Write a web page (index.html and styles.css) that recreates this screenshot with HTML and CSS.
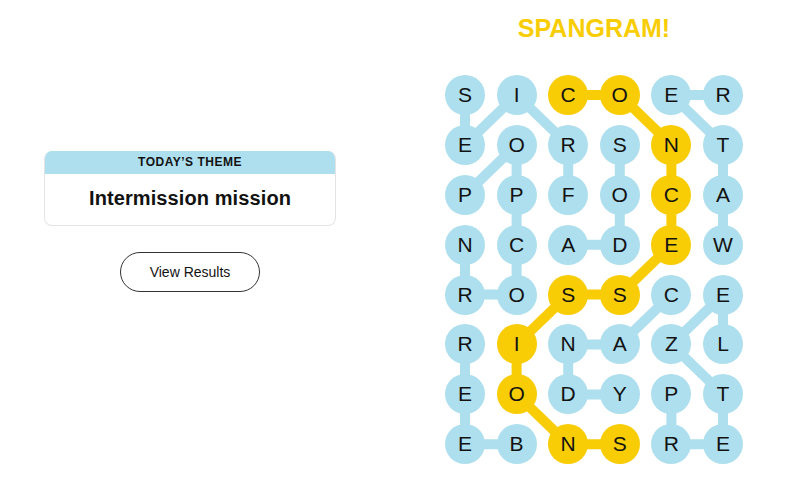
FILE: index.html
```html
<!DOCTYPE html>
<html lang="en">
<head>
<meta charset="utf-8">
<title>Strands</title>
<link rel="stylesheet" href="styles.css">
</head>
<body>
<main class="page">
  <section class="left">
    <div class="theme-card">
      <div class="theme-head">TODAY’S THEME</div>
      <div class="theme-body">Intermission mission</div>
    </div>
    <button class="results-btn" type="button">View Results</button>
  </section>
  <section class="right">
    <h1 class="spangram">SPANGRAM!</h1>
    <div class="board">
      <svg class="links" width="298" height="390" viewBox="0 0 298 390" aria-hidden="true">
        <g fill="none" stroke="#aedfee" stroke-width="10" stroke-linejoin="round" stroke-linecap="round">
          <polyline points="123.2,119.8 123.2,69.9 71.6,20 20,69.9 20,20"/>
          <polyline points="20,119.8 71.6,69.9 71.6,119.8 71.6,169.7 71.6,219.6 20,219.6 20,169.7"/>
          <polyline points="174.8,69.9 174.8,119.8 174.8,169.7 123.2,169.7"/>
          <polyline points="278,169.7 278,119.8 278,69.9 226.4,20 278,20"/>
          <polyline points="71.6,369.3 20,369.3 20,319.4 20,269.5"/>
          <polyline points="226.4,219.6 174.8,269.5 123.2,269.5 123.2,319.4 174.8,319.4"/>
          <polyline points="226.4,319.4 226.4,369.3 278,369.3 278,319.4 226.4,269.5 278,219.6 278,269.5"/>
        </g>
        <polyline fill="none" stroke="#f8cd05" stroke-width="10" stroke-linejoin="round" points="123.2,20 174.8,20 226.4,69.9 226.4,119.8 226.4,169.7 174.8,219.6 123.2,219.6 71.6,269.5 71.6,319.4 123.2,369.3 174.8,369.3"/>
      </svg>
      <div class="cell">S</div><div class="cell">I</div><div class="cell gold">C</div><div class="cell gold">O</div><div class="cell">E</div><div class="cell">R</div>
      <div class="cell">E</div><div class="cell">O</div><div class="cell">R</div><div class="cell">S</div><div class="cell gold">N</div><div class="cell">T</div>
      <div class="cell">P</div><div class="cell">P</div><div class="cell">F</div><div class="cell">O</div><div class="cell gold">C</div><div class="cell">A</div>
      <div class="cell">N</div><div class="cell">C</div><div class="cell">A</div><div class="cell">D</div><div class="cell gold">E</div><div class="cell">W</div>
      <div class="cell">R</div><div class="cell">O</div><div class="cell gold">S</div><div class="cell gold">S</div><div class="cell">C</div><div class="cell">E</div>
      <div class="cell">R</div><div class="cell gold">I</div><div class="cell">N</div><div class="cell">A</div><div class="cell">Z</div><div class="cell">L</div>
      <div class="cell">E</div><div class="cell gold">O</div><div class="cell">D</div><div class="cell">Y</div><div class="cell">P</div><div class="cell">T</div>
      <div class="cell">E</div><div class="cell">B</div><div class="cell gold">N</div><div class="cell gold">S</div><div class="cell">R</div><div class="cell">E</div>
    </div>
  </section>
</main>
</body>
</html>
```

FILE: styles.css
```css
html, body {
  margin: 0;
  padding: 0;
  background: #ffffff;
}

body {
  font-family: "Liberation Sans", Arial, sans-serif;
  color: #121212;
  width: 800px;
  height: 504px;
  overflow: hidden;
}

.page {
  display: flex;
  height: 504px;
}

.left {
  width: 380px;
  display: flex;
  flex-direction: column;
  align-items: center;
  padding-top: 151px;
  box-sizing: border-box;
}

.theme-card {
  width: 292px;
  box-sizing: border-box;
  border: 1px solid #e3e3e3;
  border-top: none;
  border-radius: 8px;
  overflow: hidden;
  background: #ffffff;
}

.theme-head {
  background: #aedfee;
  height: 23px;
  line-height: 23px;
  text-align: center;
  font-size: 12px;
  font-weight: 700;
  letter-spacing: 0.5px;
  color: #121212;
}

.theme-body {
  padding: 12px 0 15px;
  line-height: 24px;
  text-align: center;
  font-size: 20px;
  font-weight: 700;
  letter-spacing: 0.1px;
  color: #121212;
}

.results-btn {
  margin-top: 26px;
  width: 140px;
  height: 40px;
  border: 1px solid #333333;
  border-radius: 20px;
  background: #ffffff;
  font-family: "Liberation Sans", Arial, sans-serif;
  font-size: 14px;
  color: #121212;
  padding: 0;
}

.right {
  flex: 1;
  margin-left: 8px;
  display: flex;
  flex-direction: column;
  align-items: center;
  padding-top: 13px;
}

.spangram {
  margin: 0;
  font-size: 25px;
  line-height: 30px;
  font-weight: 700;
  color: #f8cd05;
}

.board {
  position: relative;
  margin-top: 32px;
  width: 298px;
  display: grid;
  grid-template-columns: repeat(6, 40px);
  grid-auto-rows: 40px;
  column-gap: 11.6px;
  row-gap: 9.9px;
}

.links {
  position: absolute;
  left: 0;
  top: 0;
}

.cell {
  position: relative;
  width: 40px;
  height: 40px;
  border-radius: 50%;
  background: #aedfee;
  display: flex;
  align-items: center;
  justify-content: center;
  font-size: 21px;
  color: #121212;
}

.cell.gold {
  background: #f8cd05;
}
```
